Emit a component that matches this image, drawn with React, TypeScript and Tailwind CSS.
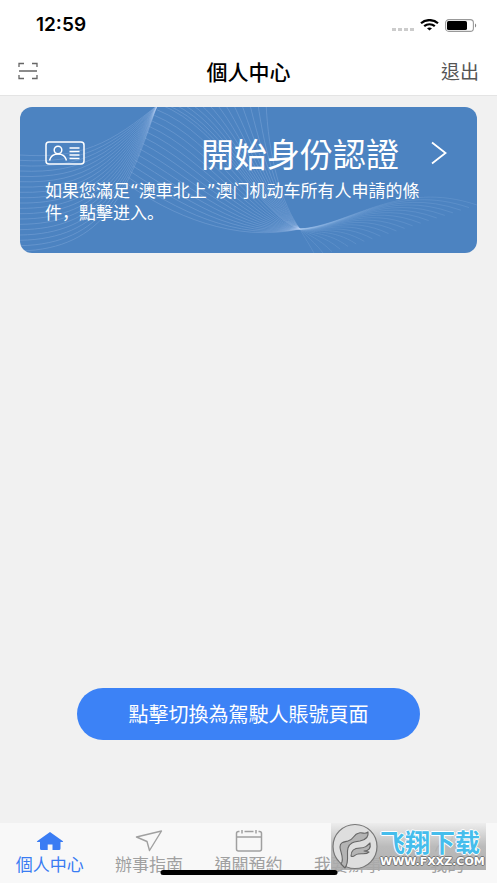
import type { ReactNode } from "react"
import clsx from "clsx"

const FONT = "font-['Noto_Sans_CJK_TC','Noto_Sans_CJK_SC',sans-serif]"

type Curve = number[]

// blends two cubic curves into a bundle of thin lines
const bundle = (from: Curve, to: Curve, count: number) =>
	Array.from({ length: count }, (_, i) => {
		const t = i / (count - 1)
		const p = from.map((v, k) => Math.round((v + (to[k] - v) * t) * 10) / 10)
		return `M${p[0]} ${p[1]}C${p[2]} ${p[3]} ${p[4]} ${p[5]} ${p[6]} ${p[7]}`
	})

const leftWaves = bundle([0, 48, 60, 52, 90, 38, 140, -4], [0, 144, 85, 142, 108, 85, 137, -2], 19)
const lowerWaves = bundle([106, 76, 150, 108, 215, 136, 280, 122], [139, -3, 205, 22, 240, 112, 280, 122], 15)
const upperWaves = bundle([145, -3, 208, 22, 240, 110, 280, 122], [246, -6, 248, 50, 262, 98, 280, 122], 13)
const rightWaves = bundle([280, 122, 330, 118, 380, 72, 457, 98], [280, 122, 284, 130, 290, 138, 296, 150], 21)

const Waves = () => (
	<svg
		className="absolute inset-0 h-full w-full"
		viewBox="0 0 457 146"
		preserveAspectRatio="none"
		fill="none"
		stroke="#b9d3f5"
		strokeWidth="0.8"
		aria-hidden="true"
	>
		<g strokeOpacity="0.28">
			{[...leftWaves, ...lowerWaves, ...upperWaves].map((d) => (
				<path key={d} d={d} />
			))}
		</g>
		<g strokeOpacity="0.18">
			{rightWaves.map((d) => (
				<path key={d} d={d} />
			))}
		</g>
	</svg>
)

const ScanIcon = () => (
	<svg className="h-[18px] w-5" viewBox="0 0 20 18" fill="none" stroke="#666" strokeWidth="1.3" aria-hidden="true">
		<path d="M1 5V1.5H6M14 1.5H19V5M1 13V16.5H6M14 16.5H19V13M1 9H19" />
	</svg>
)

const WifiIcon = () => (
	<svg className="h-3 w-[19px]" viewBox="0 0 19 12" fill="none" stroke="#000" strokeWidth="2.2" aria-hidden="true">
		<path d="M1 4.2C5.6 0 13.4 0 18 4.2" />
		<path d="M4.2 7.2C7.2 4.6 11.8 4.6 14.8 7.2" />
		<path d="M7 9.2C8.5 8.2 10.5 8.2 12 9.2L9.5 11.6Z" fill="#000" stroke="none" />
	</svg>
)

const BatteryIcon = () => (
	<svg className="h-[13px] w-8" viewBox="0 0 32 13" fill="none" aria-hidden="true">
		<rect x="0.6" y="0.6" width="27.8" height="11.8" rx="3.2" stroke="#999" strokeWidth="1.1" />
		<rect x="2" y="2" width="20" height="9" rx="1.6" fill="#000" />
		<path d="M30 4.5C31.6 5 31.6 8 30 8.5Z" fill="#888" />
	</svg>
)

const IdCardIcon = () => (
	<svg className="h-6 w-10" viewBox="0 0 40 24" fill="none" stroke="#fff" strokeWidth="1.5" aria-hidden="true">
		<rect x="1" y="1" width="38" height="22" rx="3" />
		<circle cx="13" cy="9" r="3.8" />
		<path d="M4.5 19.5C5.5 15.5 8.5 13 13 13C17.5 13 20.5 15.5 21.5 19.5" />
		<path d="M24.5 7H34.5M24.5 10.5H34.5M24.5 14H34.5M24.5 17.5H34.5" strokeWidth="1.3" />
	</svg>
)

const HomeIcon = () => (
	<svg className="h-6 w-7" viewBox="0 0 28 24" fill="currentColor" aria-hidden="true">
		<path d="M14 3L27 12.2Q27.5 13 26.5 13H24.5V19.5Q24.5 21 23 21H16.5V15.5H11.7V21H5.5Q4 21 4 19.5V13H1.5Q.5 13 1 12.2Z" />
	</svg>
)

const SendIcon = () => (
	<svg className="h-6 w-7" viewBox="0 0 28 24" fill="none" stroke="currentColor" strokeWidth="1.4" strokeLinejoin="round" aria-hidden="true">
		<path d="M26.5 2L1.5 8L12 12.5L14.5 21.5Z" />
	</svg>
)

const CalendarIcon = () => (
	<svg className="h-6 w-7" viewBox="0 0 28 24" fill="none" stroke="currentColor" strokeWidth="1.5" aria-hidden="true">
		<path d="M4.5 2.5H3.5Q1.5 2.5 1.5 4.5V20Q1.5 22 3.5 22H24.5Q26.5 22 26.5 20V4.5Q26.5 2.5 24.5 2.5H23.5M9.5 2.5H18.5M1.5 8H26.5M7 1V4.5M21 1V4.5" />
	</svg>
)

const FormIcon = () => (
	<svg className="h-6 w-7" viewBox="0 0 28 24" fill="none" stroke="currentColor" strokeWidth="1.4" aria-hidden="true">
		<path d="M4 2H24V22H4ZM9 8H19M9 13H19" />
	</svg>
)

const PersonIcon = () => (
	<svg className="h-6 w-7" viewBox="0 0 28 24" fill="none" stroke="currentColor" strokeWidth="1.4" aria-hidden="true">
		<circle cx="14" cy="7.5" r="5.5" />
		<path d="M2.5 22.5C4 16.5 8 14 14 14C20 14 24 16.5 25.5 22.5" />
	</svg>
)

const TabItem = ({ icon, title, active }: { icon: ReactNode; title: string; active?: boolean }) => (
	<a
		href="#"
		aria-current={active ? "page" : undefined}
		className={clsx("flex flex-1 flex-col items-center pt-[6px]", active ? "text-[#3a7cf3]" : "text-[#a0a0a0]")}
	>
		{icon}
		<span className="text-[17px] leading-[22px] whitespace-nowrap">{title}</span>
	</a>
)

const SiteBadge = () => (
	<div className="absolute right-[11px] bottom-[13px] flex h-[47px] w-[155px] items-center gap-[2px] bg-linear-to-b from-[#ececec]/90 via-[#b4b4b4]/90 to-[#a8a8a8]/90">
		<svg className="h-[47px] w-[47px] shrink-0" viewBox="0 0 47 47" aria-hidden="true">
			<circle cx="24" cy="23.5" r="22" fill="#dedede" stroke="#777" strokeWidth="1.2" />
			<g fill="#b4b4b4" stroke="#666" strokeWidth="1.1" strokeLinejoin="round">
				<path d="M10 41C14 36 9 29 9 24C9 19 13 19 17 18C23 17 22 11 28 10C32 9 34 12 37 9C38 15 34 17 29 18C23 19 19 19 17 25C15 31 19 38 14 45Z" />
				<path d="M20 33C20 27 24 25 29 25C34 25 36 23 39 20C40 25 38 28 33 28L38 29C35 32 31 30 27 31C24 31 23 35 20 33Z" />
			</g>
		</svg>
		<div className="flex flex-col pt-[3px]">
			<span className="text-[25px] leading-7 font-bold whitespace-nowrap text-[#45bdec] [text-shadow:1px_0_#fff,-1px_0_#fff,0_1px_#fff,0_-1px_#fff] font-['Noto_Sans_CJK_SC',sans-serif]">
				飞翔下载
			</span>
			<span className="text-[11px] leading-[14px] font-bold whitespace-nowrap text-white [text-shadow:1px_0_#777,-1px_0_#777,0_1px_#777,0_-1px_#777] font-['DejaVu_Sans',sans-serif]">
				WWW.FXXZ.COM
			</span>
		</div>
	</div>
)

export default function App() {
	return (
		<div lang="zh-Hant" className={clsx("flex min-h-screen flex-col bg-[#f1f1f1]", FONT)}>
			<header className="border-b border-[#e4e4e4] bg-white">
				<div className="flex h-12 items-center justify-between pt-[2px] pr-5 pl-9">
					<span className="text-[19px] font-semibold text-black font-['Inter',sans-serif]">12:59</span>
					<div className="flex items-center gap-[6px]">
						<div className="mt-2 flex gap-[2px]">
							<i className="h-[3px] w-1 bg-[#ccc]" />
							<i className="h-[3px] w-1 bg-[#ccc]" />
							<i className="h-[3px] w-1 bg-[#ccc]" />
							<i className="h-[3px] w-1 bg-[#ccc]" />
						</div>
						<WifiIcon />
						<BatteryIcon />
					</div>
				</div>
				<div className="grid h-[47px] grid-cols-3 items-center px-[18px] pb-[2px]">
					<button type="button" aria-label="掃描" className="justify-self-start">
						<ScanIcon />
					</button>
					<h1 className="justify-self-center text-[21px] leading-6 font-medium whitespace-nowrap text-black">個人中心</h1>
					<button type="button" className="justify-self-end text-[19px] leading-6 text-[#555]">
						退出
					</button>
				</div>
			</header>

			<main className="flex flex-1 flex-col justify-between pt-[11px] pb-[83px]">
				<a href="#" className="relative mx-5 block overflow-hidden rounded-xl bg-[#4c83c1] pt-[26px] pb-[29px] text-white">
					<Waves />
					<div className="relative flex items-center pr-[30px] pl-[25px]">
						<IdCardIcon />
						<h2 className="ml-auto text-[33px] leading-10 font-normal whitespace-nowrap">開始身份認證</h2>
						<svg className="ml-8 h-6 w-4" viewBox="0 0 16 24" fill="none" stroke="#fff" strokeWidth="1.8" aria-hidden="true">
							<path d="M1 1.5L14.5 12L1 22.5" />
						</svg>
					</div>
					<p
						lang="zh-Hans"
						className="relative mt-[7px] pr-12 pl-[25px] text-[17px] leading-[22px] font-['DejaVu_Sans','Noto_Sans_CJK_SC',sans-serif]"
					>
						如果您滿足“澳車北上”澳门机动车所有人申請的條件，點擊进入。
					</p>
				</a>

				<button type="button" className="mx-auto h-[52px] w-[69%] rounded-full bg-[#3c82f6] text-xl text-white">
					點擊切換為駕駛人賬號頁面
				</button>
			</main>

			<nav className="relative flex h-[60px] bg-[#f8f8f8]">
				<TabItem icon={<HomeIcon />} title="個人中心" active />
				<TabItem icon={<SendIcon />} title="辦事指南" />
				<TabItem icon={<CalendarIcon />} title="通關預約" />
				<TabItem icon={<FormIcon />} title="我要辦事" />
				<TabItem icon={<PersonIcon />} title="我的" />
				<div className="absolute bottom-2 left-1/2 h-[5px] w-[177px] -translate-x-1/2 rounded-full bg-black" />
				<SiteBadge />
			</nav>
		</div>
	)
}
